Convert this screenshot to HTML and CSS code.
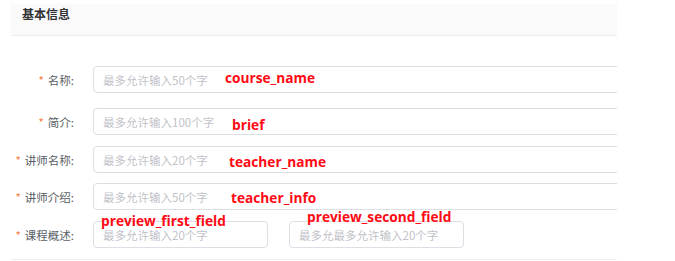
FILE: index.html
```html
<!DOCTYPE html>
<html lang="zh-CN">
<head>
<meta charset="utf-8">
<link rel="stylesheet" href="styles.css">
</head>
<body>
<div class="page">
  <div class="panel">
    <div class="panel-header">基本信息</div>
    <form class="form">
      <div class="form-item row-1">
        <label class="label"><span class="req">*</span>名称:</label>
        <div class="control"><input class="input wide" placeholder="最多允许输入50个字"></div>
      </div>
      <div class="form-item row-2">
        <label class="label"><span class="req">*</span>简介:</label>
        <div class="control"><input class="input wide" placeholder="最多允许输入100个字"></div>
      </div>
      <div class="form-item row-3">
        <label class="label"><span class="req">*</span>讲师名称:</label>
        <div class="control"><input class="input wide" placeholder="最多允许输入20个字"></div>
      </div>
      <div class="form-item row-4">
        <label class="label"><span class="req">*</span>讲师介绍:</label>
        <div class="control"><input class="input wide" placeholder="最多允许输入50个字"></div>
      </div>
      <div class="form-item row-5">
        <label class="label"><span class="req">*</span>课程概述:</label>
        <div class="control pair">
          <input class="input half" placeholder="最多允许输入20个字">
          <input class="input half" placeholder="最多允最多允许输入20个字">
        </div>
      </div>
    </form>
  </div>
  <span class="note n1">course_name</span>
  <span class="note n2">brief</span>
  <span class="note n3">teacher_name</span>
  <span class="note n4">teacher_info</span>
  <span class="note n5">preview_first_field</span>
  <span class="note n6">preview_second_field</span>
</div>
</body>
</html>
```

FILE: styles.css
```css
html, body {
  margin: 0;
  padding: 0;
  background: #ffffff;
}

.page {
  position: relative;
  width: 675px;
  height: 261px;
  font-family: "Noto Sans CJK SC", "Noto Sans", sans-serif;
}

.panel {
  position: relative;
  top: 4px;
  margin-left: 11px;
  width: 606px;
  overflow: hidden;
  border-bottom: 1px solid #ebeef5;
  height: 256px;
  box-sizing: border-box;
}

.panel-header {
  height: 32px;
  box-sizing: border-box;
  background: #fafafa;
  border-bottom: 1px solid #ebeef5;
  padding: 1px 0 0 11px;
  font-size: 12px;
  font-weight: bold;
  color: #303133;
  line-height: 18px;
}

.form {
  margin: 0;
  padding-top: 30px;
  display: flex;
  flex-direction: column;
}

.form-item {
  display: flex;
  align-items: center;
  height: 27px;
}

.row-2 { margin-top: 15px; }
.row-3 { margin-top: 11px; }
.row-4 { margin-top: 10px; }
.row-5 { margin-top: 11px; }

.label {
  width: 63px;
  flex: none;
  text-align: right;
  font-size: 11.5px;
  color: #5a5e66;
  padding-right: 19px;
  white-space: nowrap;
}

.req {
  color: #f5803e;
  margin-right: 4px;
}

.control {
  flex: none;
  display: flex;
}

.pair {
  gap: 21px;
}

.input {
  box-sizing: border-box;
  height: 27px;
  border: 1px solid #dcdfe6;
  border-radius: 4px;
  padding: 0 9px;
  font-family: "Noto Sans CJK SC", "Noto Sans", sans-serif;
  font-size: 11.5px;
  color: #606266;
  background: #fff;
  outline: none;
}

.input::placeholder {
  color: #bfc2c8;
}

.wide { width: 600px; }
.half { width: 175px; }

.note {
  position: absolute;
  font-family: "Open Sans", "Liberation Sans", sans-serif;
  font-weight: bold;
  font-size: 13.7px;
  line-height: 14px;
  color: #ff0a14;
  white-space: nowrap;
}

.n1 { left: 225px; top: 71px; }
.n2 { left: 232px; top: 118px; }
.n3 { left: 229px; top: 155px; }
.n4 { left: 231px; top: 191px; }
.n5 { left: 101px; top: 214px; }
.n6 { left: 307px; top: 210px; }
```
